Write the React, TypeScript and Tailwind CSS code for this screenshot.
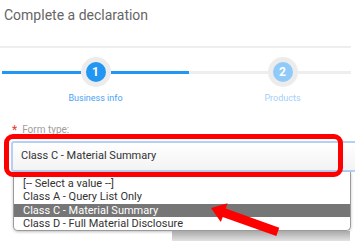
import React from "react";

function Step({ n, label, active, leftColor, rightColor }: { n: string; label: string; active: boolean; leftColor: string; rightColor: string }) {
  return (
    <div className="flex w-[187px] shrink-0 flex-col items-center">
      <div className="flex h-[30px] w-full items-center">
        <div className={`h-[3px] flex-1 ${leftColor}`} />
        <div className="flex h-[30px] w-[30px] items-center justify-center rounded-full bg-[#ececec]">
          <div
            className={`flex h-[20px] w-[20px] items-center justify-center rounded-full text-[12px] font-bold leading-none text-white ${
              active ? "bg-[#2196f3]" : "bg-[#90caf9]"
            }`}
          >
            {n}
          </div>
        </div>
        <div className={`h-[3px] flex-1 ${rightColor}`} />
      </div>
      <div className={`mt-[6px] text-[9px] leading-[11px] ${active ? "text-[#4a9ff5]" : "text-[#9fd0fa]"}`}>{label}</div>
    </div>
  );
}

export default function App() {
  const items = [
    "[-- Select a value --]",
    "Class A - Query List Only",
    "Class C - Material Summary",
    "Class D - Full Material Disclosure",
  ];
  return (
    <div className="relative h-[248px] w-[355px] overflow-hidden bg-white font-['Roboto',sans-serif]">
      <div className="box-border h-[48px] w-[351px] border-b-2 border-[#eeeeee] pl-[4px] pt-[7px] text-[14px] leading-[17px] text-[#666666]">
        Complete a declaration
      </div>

      <div className="mt-[9px] ml-[2px] flex w-[349px] overflow-hidden">
        <Step n="1" label="Business info" active leftColor="bg-[#2196f3]" rightColor="bg-[#2196f3]" />
        <Step n="2" label="Products" active={false} leftColor="bg-[#eeeeee]" rightColor="bg-[#eeeeee]" />
      </div>

      <div className="mt-[20px] flex items-center pl-[12px] text-[10px] leading-[12px]">
        <span className="text-[12px] text-[#e53935]">*</span>
        <span className="ml-[5px] text-[#9e9e9e]">Form type:</span>
      </div>

      <div className="mt-[5px] ml-[11px] box-border flex h-[31px] w-[350px] items-center rounded-[3px] border-2 border-[#b5cff5] bg-gradient-to-b from-white to-[#f3f3f3] pl-[8px] text-[11px] text-[#333333]">
        Class C - Material Summary
      </div>

      <div className="ml-[13px] box-border w-[338px] rounded-b-[5px] border-x border-b border-[#9a9a9a] bg-white pt-[5px] shadow-[0_1px_3px_rgba(0,0,0,0.25)]">
        {items.map((t, i) => (
          <div
            key={t}
            className={`h-[13.3px] pl-[9px] text-[11px] leading-[13.3px] ${
              i === 2 ? "bg-[#767676] text-white" : "text-[#333333]"
            }`}
          >
            {t}
          </div>
        ))}
      </div>
      <div className="ml-[172px] h-[10px] w-[178px] bg-gradient-to-b from-[#a9a9a9] to-[#e2e2e2]" />

      <div className="pointer-events-none absolute left-[4px] top-[134px] box-border h-[43px] w-[339px] rounded-[9px] border-[5px] border-[#ff0000]" />

      <svg className="pointer-events-none absolute left-0 top-0" width="355" height="248" viewBox="0 0 355 248">
        <polygon
          points="211,208 227.6,203.3 225.7,208.5 279.3,227.7 276.3,236.1 222.7,216.9 220.8,222.1"
          fill="#ff0000"
        />
      </svg>
    </div>
  );
}
